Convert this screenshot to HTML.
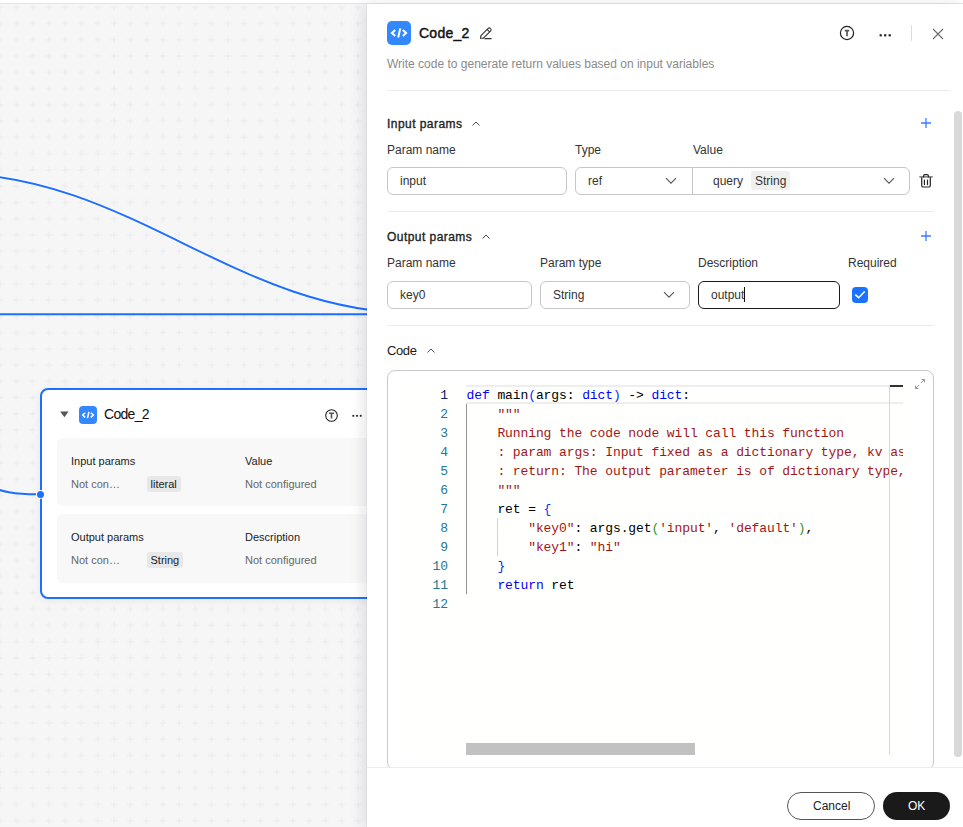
<!DOCTYPE html>
<html><head><meta charset="utf-8">
<style>
*{box-sizing:border-box;margin:0;padding:0}
html,body{width:963px;height:827px;overflow:hidden;background:#f6f6f7;font-family:"Liberation Sans",sans-serif;color:#1f1f1f}
.abs{position:absolute}
#topbar{position:absolute;left:0;top:0;width:963px;height:4px;background:#fff;border-bottom:1px solid #e4e5e9}
#canvas{position:absolute;left:0;top:4px;width:963px;height:823px}
.t{position:absolute;white-space:nowrap;line-height:1}
/* node */
#node{position:absolute;left:40px;top:388px;width:400px;height:211px;background:#fff;border:2px solid #1f6fff;border-radius:8px;box-shadow:0 2px 10px rgba(0,0,0,0.06)}
.nbox{position:absolute;left:15px;width:360px;background:#f8f8f9;border-radius:6px}
/* panel */
#panel{position:absolute;left:367px;top:4px;width:596px;height:823px;background:#fff;box-shadow:-1px 0 0 rgba(30,50,90,0.05),-4px 0 14px rgba(0,0,0,0.10)}
.lbl{font-size:12px;color:#333}
.inp{position:absolute;border:1px solid #c6c6c6;border-radius:6px;background:#fff}
.div{position:absolute;height:1px;background:#ececec}
.sec{font-size:12px;font-weight:normal;letter-spacing:0.45px;-webkit-text-stroke:0.35px #222;color:#222}
.chev{position:absolute}
.code{font-family:"Liberation Mono",monospace;font-size:13px;letter-spacing:-0.1px;white-space:pre;line-height:19px}
.ln{position:absolute;width:46px;text-align:right;color:#237893;font-family:"Liberation Mono",monospace;font-size:13px;line-height:19px}
.kw{color:#0000ff}.st{color:#a31515}.br{color:#0431fa}.br2{color:#319331}
</style></head><body>
<div id="topbar"></div>
<svg class="abs" style="left:0;top:0" width="963" height="827">
  <defs>
    <pattern id="grid" x="0.13" y="7.2" width="16.27" height="16.27" patternUnits="userSpaceOnUse">
      <path d="M-3.5 0H3.5M0 -3.5V3.5M12.77 0H19.77M16.27 -3.5V3.5M-3.5 16.27H3.5M0 12.77V19.77M12.77 16.27H19.77M16.27 12.77V19.77" stroke="#e4e8ee" stroke-width="0.8"/>
    </pattern>
  </defs>
  <rect x="0" y="5" width="963" height="822" fill="url(#grid)"/>
  <path d="M-49.4 173.6 C129.7 173.6 236.3 313 415.4 313" fill="none" stroke="#fff" stroke-width="4" opacity="0.6"/>
  <path d="M-49.4 173.6 C129.7 173.6 236.3 313 415.4 313" fill="none" stroke="#1f6fff" stroke-width="2"/>
  <path d="M0 314.2 L400 314.2" fill="none" stroke="#1f6fff" stroke-width="2"/>
  <path d="M-60 480 C-10 480 -10 494.3 36 494.3" fill="none" stroke="#1f6fff" stroke-width="2"/>
</svg>

<div id="node">
  <svg class="abs" style="left:17.5px;top:21px" width="10" height="8"><path d="M0.2 0.6 L8.6 0.6 L4.4 6.2Z" fill="#555"/></svg>
  <div class="abs" style="left:36.5px;top:15.6px;width:18px;height:18px;background:#3388ff;border-radius:4px"></div>
  <svg class="abs" style="left:36.5px;top:15.6px" width="18" height="18"><path d="M6.15 6.75 L3.7 9.05 L6.15 11.35 M11.85 6.75 L14.3 9.05 L11.85 11.35 M9.9 5.85 L8.5 12.1" stroke="#fff" stroke-width="1.5" fill="none"/></svg>
  <div class="t" style="left:62px;top:16.5px;font-size:14px;letter-spacing:-0.7px;color:#111">Code_2</div>
  <svg class="abs" style="left:283px;top:19px" width="13" height="13"><circle cx="6.5" cy="6.5" r="5.8" stroke="#222" stroke-width="1.1" fill="none"/><path d="M4 4.2H9M6.5 4.2V9.5" stroke="#555" stroke-width="1.6"/></svg>
  <svg class="abs" style="left:310px;top:23.5px" width="12" height="4"><rect x="0.4" y="0.9" width="1.8" height="1.8" fill="#222"/><rect x="4.1" y="0.9" width="1.8" height="1.8" fill="#222"/><rect x="7.8" y="0.9" width="1.8" height="1.8" fill="#222"/></svg>
  <div class="nbox" style="top:48px;height:68px">
    <div class="t" style="left:14px;top:18px;font-size:11px;color:#1c1c1c">Input params</div>
    <div class="t" style="left:14px;top:41px;font-size:11px;color:#666">Not con…</div>
    <div class="abs" style="left:90px;top:38px;width:33.5px;height:16px;background:#e8e8e8;border-radius:3px"></div>
    <div class="t" style="left:93.5px;top:41px;font-size:11px;color:#222">literal</div>
    <div class="t" style="left:188px;top:18px;font-size:11px;color:#1c1c1c">Value</div>
    <div class="t" style="left:188px;top:41px;font-size:11px;color:#666">Not configured</div>
  </div>
  <div class="nbox" style="top:124px;height:69px">
    <div class="t" style="left:14px;top:18px;font-size:11px;color:#1c1c1c">Output params</div>
    <div class="t" style="left:14px;top:41px;font-size:11px;color:#666">Not con…</div>
    <div class="abs" style="left:90px;top:38px;width:35.5px;height:16px;background:#e8e8e8;border-radius:3px"></div>
    <div class="t" style="left:93.5px;top:41px;font-size:11px;color:#222">String</div>
    <div class="t" style="left:188px;top:18px;font-size:11px;color:#1c1c1c">Description</div>
    <div class="t" style="left:188px;top:41px;font-size:11px;color:#666">Not configured</div>
  </div>
</div>
<svg class="abs" style="left:35px;top:489px" width="11" height="11"><circle cx="5.5" cy="5.4" r="4.3" fill="#fff"/><circle cx="5.5" cy="5.4" r="3.5" fill="#1f6fff"/></svg>

<div id="panel">
  <!-- header (panel-relative coords: x-367, y-4) -->
  <div class="abs" style="left:20px;top:17px;width:24px;height:24px;background:#3388ff;border-radius:5px"></div>
  <svg class="abs" style="left:20px;top:17px" width="24" height="24"><path d="M8.2 9 L4.9 12.05 L8.2 15.1 M15.8 9 L19.1 12.05 L15.8 15.1 M13.3 7.4 L11.2 16.5" stroke="#fff" stroke-width="2" fill="none" stroke-linecap="butt" stroke-linejoin="miter"/></svg>
  <div class="t" style="left:52px;top:22px;font-size:14px;letter-spacing:0.25px;-webkit-text-stroke:0.45px #111;color:#111">Code_2</div>
  <svg class="abs" style="left:111px;top:22px" width="15" height="15"><path d="M2.5 12.3 L2.9 9.6 L10.2 2.3 Q11.2 1.3 12.2 2.3 L12.7 2.8 Q13.7 3.8 12.7 4.8 L5.4 12.1 Z M9.2 3.4 L11.6 5.8 M6.5 12.6 H13.5" stroke="#333" stroke-width="1.1" fill="none" stroke-linejoin="round"/></svg>
  <div class="t" style="left:20px;top:54px;font-size:12px;color:#8a8a8a">Write code to generate return values based on input variables</div>
  <svg class="abs" style="left:472px;top:21px" width="16" height="16"><circle cx="8" cy="8" r="6.6" stroke="#222" stroke-width="1.2" fill="none"/><path d="M5.8 5.7H10.2M8 5.7V11.2" stroke="#555" stroke-width="1.7"/></svg>
  <svg class="abs" style="left:511px;top:28px" width="14" height="6"><rect x="1.6" y="2.2" width="2.2" height="2.2" fill="#222"/><rect x="6.1" y="2.2" width="2.2" height="2.2" fill="#222"/><rect x="10.6" y="2.2" width="2.2" height="2.2" fill="#222"/></svg>
  <div class="abs" style="left:544px;top:21px;width:1px;height:16px;background:#dcdcdc"></div>
  <svg class="abs" style="left:565px;top:24px" width="12" height="12"><path d="M1 1 L11 11 M11 1 L1 11" stroke="#6a6a6a" stroke-width="1.1"/></svg>
  <div class="div" style="left:20px;top:86px;width:563px"></div>

  <!-- input params -->
  <div class="t sec" style="left:20px;top:114px">Input params</div>
  <svg class="abs chev" style="left:104px;top:116px" width="10" height="7"><path d="M1.5 5.5 L5 2 L8.5 5.5" stroke="#4a4a4a" stroke-width="1" fill="none"/></svg>
  <svg class="abs" style="left:553px;top:113px" width="12" height="12"><path d="M6 1V11M1 6H11" stroke="#3a7bff" stroke-width="1.3"/></svg>
  <div class="t lbl" style="left:20px;top:140px">Param name</div>
  <div class="t lbl" style="left:208px;top:140px">Type</div>
  <div class="t lbl" style="left:326px;top:140px">Value</div>
  <div class="inp" style="left:20px;top:163px;width:180px;height:28px"></div>
  <div class="t" style="left:33px;top:171px;font-size:12px;color:#333">input</div>
  <div class="inp" style="left:208px;top:163px;width:118px;height:28px;border-radius:6px 0 0 6px"></div>
  <div class="t" style="left:221px;top:171px;font-size:12px;color:#333">ref</div>
  <svg class="abs" style="left:298px;top:173px" width="12" height="8"><path d="M1 1.2 L6 6.2 L11 1.2" stroke="#555" stroke-width="1.1" fill="none"/></svg>
  <div class="inp" style="left:325px;top:163px;width:218px;height:28px;border-radius:0 6px 6px 0"></div>
  <div class="t" style="left:346px;top:171px;font-size:12px;color:#333">query</div>
  <div class="abs" style="left:384px;top:167px;width:39px;height:19px;background:#f0f0f0;border-radius:3px"></div>
  <div class="t" style="left:388px;top:171px;font-size:12px;color:#333">String</div>
  <svg class="abs" style="left:516px;top:173px" width="12" height="8"><path d="M1 1.2 L6 6.2 L11 1.2" stroke="#555" stroke-width="1.1" fill="none"/></svg>
  <svg class="abs" style="left:552px;top:170px" width="14" height="15"><path d="M0.3 2.9H13.7" stroke="#666" stroke-width="1.3"/><path d="M4.6 2.9V1.9Q4.6 0.7 5.8 0.7H8.2Q9.4 0.7 9.4 1.9V2.9M2.7 3.5V11.4Q2.7 13 4.3 13H9.7Q11.3 13 11.3 11.4V3.5M5.4 6.1V10.6M8.5 6.1V10.6" stroke="#222" stroke-width="1.2" fill="none" stroke-linecap="round"/></svg>
  <div class="div" style="left:20px;top:207px;width:547px"></div>

  <!-- output params -->
  <div class="t sec" style="left:20px;top:227px">Output params</div>
  <svg class="abs chev" style="left:114px;top:229px" width="10" height="7"><path d="M1.5 5.5 L5 2 L8.5 5.5" stroke="#4a4a4a" stroke-width="1" fill="none"/></svg>
  <svg class="abs" style="left:553px;top:226px" width="12" height="12"><path d="M6 1V11M1 6H11" stroke="#3a7bff" stroke-width="1.3"/></svg>
  <div class="t lbl" style="left:20px;top:253px">Param name</div>
  <div class="t lbl" style="left:173px;top:253px">Param type</div>
  <div class="t lbl" style="left:331px;top:253px">Description</div>
  <div class="t lbl" style="left:481px;top:253px">Required</div>
  <div class="inp" style="left:20px;top:277px;width:145px;height:28px"></div>
  <div class="t" style="left:33px;top:285px;font-size:12px;color:#333">key0</div>
  <div class="inp" style="left:173px;top:277px;width:150px;height:28px"></div>
  <div class="t" style="left:186px;top:285px;font-size:12px;color:#333">String</div>
  <svg class="abs" style="left:296px;top:287px" width="12" height="8"><path d="M1 1.2 L6 6.2 L11 1.2" stroke="#555" stroke-width="1.1" fill="none"/></svg>
  <div class="inp" style="left:331px;top:277px;width:142px;height:28px;border-color:#1a1a1a"></div>
  <div class="t" style="left:344px;top:285px;font-size:12px;color:#333">output</div>
  <div class="abs" style="left:377px;top:283px;width:1px;height:15px;background:#111"></div>
  <div class="abs" style="left:485px;top:283px;width:16px;height:16px;background:#1a73ff;border-radius:4px"></div>
  <svg class="abs" style="left:485px;top:283px" width="16" height="16"><path d="M3.3 7.6 L6.6 10.7 L12.7 4.5" stroke="#fff" stroke-width="1.6" fill="none"/></svg>
  <div class="div" style="left:20px;top:321px;width:547px"></div>

  <!-- code -->
  <div class="t" style="left:20px;top:340px;font-size:13px;letter-spacing:-0.4px;color:#1a1a1a">Code</div>
  <svg class="abs chev" style="left:59px;top:342.5px" width="10" height="7"><path d="M1.5 5.5 L5 2 L8.5 5.5" stroke="#4a4a4a" stroke-width="1" fill="none"/></svg>
  <div id="codebox" class="abs" style="left:20px;top:366px;width:547px;height:400px;border:1px solid #c9c9c9;border-radius:8px;overflow:hidden;background:#fff"><div class="abs" style="left:14px;top:14px;width:501px;height:370px;background:#fffffe;overflow:hidden">
<div class="abs" style="left:64px;top:0;width:437px;height:19px;border:2px solid #eeeeee;border-left:0;border-right:0"></div>
<div class="abs" style="left:64px;top:19px;width:1px;height:190px;background:#939393"></div>
<div class="abs" style="left:95px;top:133px;width:1px;height:38px;background:#d3d3d3"></div>
<div class="ln" style="left:0;top:1px;width:46px;color:#0b216f">1</div>
<div class="abs code" style="left:64.6px;top:1px;color:#000"><span class="kw">def</span> main<span class="br">(</span>args: <span class="kw">dict</span><span class="br">)</span> -&gt; <span class="kw">dict</span>:</div>
<div class="ln" style="left:0;top:20px;width:46px;color:#237893">2</div>
<div class="abs code" style="left:64.6px;top:20px;color:#000">    <span class="st">"""</span></div>
<div class="ln" style="left:0;top:39px;width:46px;color:#237893">3</div>
<div class="abs code" style="left:64.6px;top:39px;color:#000">    <span class="st">Running the code node will call this function</span></div>
<div class="ln" style="left:0;top:58px;width:46px;color:#237893">4</div>
<div class="abs code" style="left:64.6px;top:58px;color:#000">    <span class="st">: param args: Input fixed as a dictionary type, kv as the input</span></div>
<div class="ln" style="left:0;top:77px;width:46px;color:#237893">5</div>
<div class="abs code" style="left:64.6px;top:77px;color:#000">    <span class="st">: return: The output parameter is of dictionary type, the key</span></div>
<div class="ln" style="left:0;top:96px;width:46px;color:#237893">6</div>
<div class="abs code" style="left:64.6px;top:96px;color:#000">    <span class="st">"""</span></div>
<div class="ln" style="left:0;top:115px;width:46px;color:#237893">7</div>
<div class="abs code" style="left:64.6px;top:115px;color:#000">    ret = <span class="br">{</span></div>
<div class="ln" style="left:0;top:134px;width:46px;color:#237893">8</div>
<div class="abs code" style="left:64.6px;top:134px;color:#000">        <span class="st">"key0"</span>: args.get<span class="br2">(</span><span class="st">'input'</span>, <span class="st">'default'</span><span class="br2">)</span>,</div>
<div class="ln" style="left:0;top:153px;width:46px;color:#237893">9</div>
<div class="abs code" style="left:64.6px;top:153px;color:#000">        <span class="st">"key1"</span>: <span class="st">"hi"</span></div>
<div class="ln" style="left:0;top:172px;width:46px;color:#237893">10</div>
<div class="abs code" style="left:64.6px;top:172px;color:#000">    <span class="br">}</span></div>
<div class="ln" style="left:0;top:191px;width:46px;color:#237893">11</div>
<div class="abs code" style="left:64.6px;top:191px;color:#000">    <span class="kw">return</span> ret</div>
<div class="ln" style="left:0;top:210px;width:46px;color:#237893">12</div>
<div class="abs code" style="left:64.6px;top:210px;color:#000"></div>
<div class="abs" style="left:487px;top:0;width:1px;height:370px;background:#d6d6d6"></div>
<div class="abs" style="left:488px;top:0;width:13px;height:2px;background:#333"></div>
<div class="abs" style="left:64px;top:358px;width:229px;height:12px;background:#c1c1c1"></div>
</div>
<svg class="abs" style="left:526px;top:7px" width="12" height="12"><path d="M6.9 5.1 L10.4 1.6 M7.7 1.5 H10.5 V4.3 M5.1 6.9 L1.6 10.4 M1.5 7.7 V10.5 H4.3" stroke="#8a8a8a" stroke-width="0.9" fill="none"/></svg></div>

  <!-- scrollbar -->
  <div class="abs" style="left:587px;top:107px;width:8px;height:646px;background:#d9d9d9;border-radius:4px"></div>
  <!-- footer -->
  <div class="abs" style="left:0;top:763px;width:596px;height:60px;background:#fff;border-top:1px solid #ececec"></div>
  <div class="abs" style="left:420px;top:788px;width:88px;height:28px;border:1px solid #555;border-radius:14px"></div>
  <div class="t" style="left:446px;top:796px;font-size:12px;color:#222">Cancel</div>
  <div class="abs" style="left:516px;top:788px;width:67px;height:28px;background:#1a1a1a;border-radius:14px"></div>
  <div class="t" style="left:541px;top:796px;font-size:12px;color:#fff">OK</div>
</div>
</body></html>
